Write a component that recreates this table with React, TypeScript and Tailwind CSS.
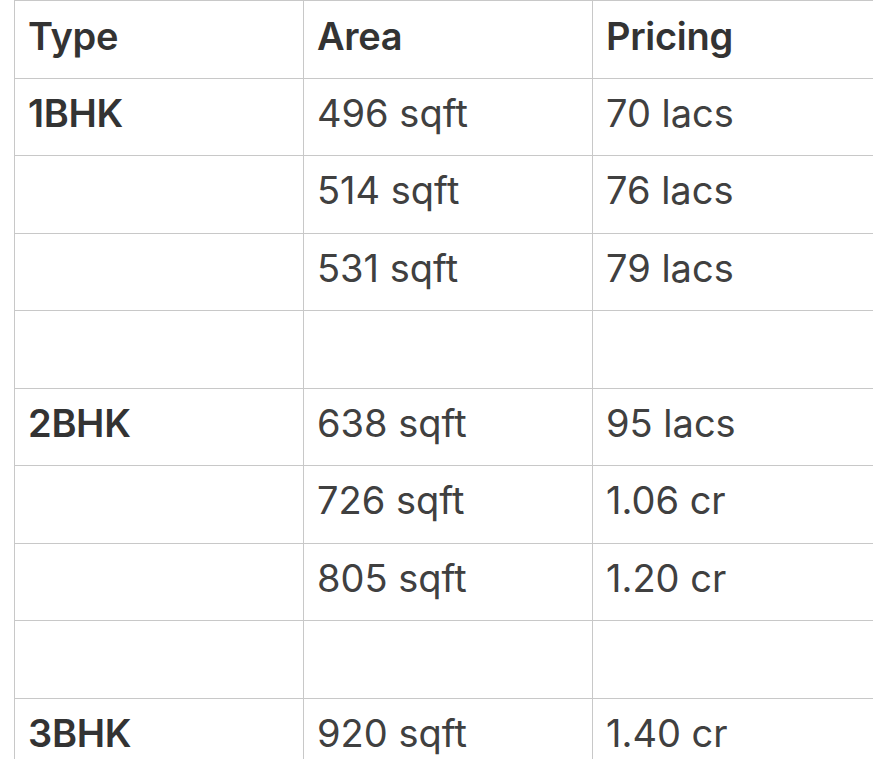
import React from "react";

const rows: [string, string, string][] = [
  ["1BHK", "496 sqft", "70 lacs"],
  ["", "514 sqft", "76 lacs"],
  ["", "531 sqft", "79 lacs"],
  ["", "", ""],
  ["2BHK", "638 sqft", "95 lacs"],
  ["", "726 sqft", "1.06 cr"],
  ["", "805 sqft", "1.20 cr"],
  ["", "", ""],
  ["3BHK", "920 sqft", "1.40 cr"],
];

export default function App() {
  return (
    <div className="w-[873px] h-[759px] overflow-hidden bg-white" style={{ fontFamily: "Inter, 'Noto Sans', sans-serif" }}>
      <table className="ml-[14px] w-[867px] table-fixed border-collapse text-[38px] leading-[46px]">
        <colgroup>
          <col className="w-[289px]" />
          <col className="w-[289px]" />
          <col className="w-[289px]" />
        </colgroup>
        <thead>
          <tr className="h-[77.5px]">
            {["Type", "Area", "Pricing"].map((h) => (
              <th key={h} className="border border-[#c8c8c8] px-[13px] pt-[12px] pb-0 text-left align-top font-semibold tracking-[-0.3px] text-[#333333]">
                {h}
              </th>
            ))}
          </tr>
        </thead>
        <tbody>
          {rows.map((r, i) => (
            <tr key={i} className="h-[77.5px]">
              <td className="border border-[#c8c8c8] px-[13px] pt-[11px] pb-0 align-top font-semibold tracking-[-0.3px] text-[#333333]">{r[0]}</td>
              <td className="border border-[#c8c8c8] px-[13px] pt-[11px] pb-0 align-top font-normal text-[#404040]">{r[1]}</td>
              <td className="border border-[#c8c8c8] px-[13px] pt-[11px] pb-0 align-top font-normal text-[#404040]">{r[2]}</td>
            </tr>
          ))}
        </tbody>
      </table>
    </div>
  );
}
